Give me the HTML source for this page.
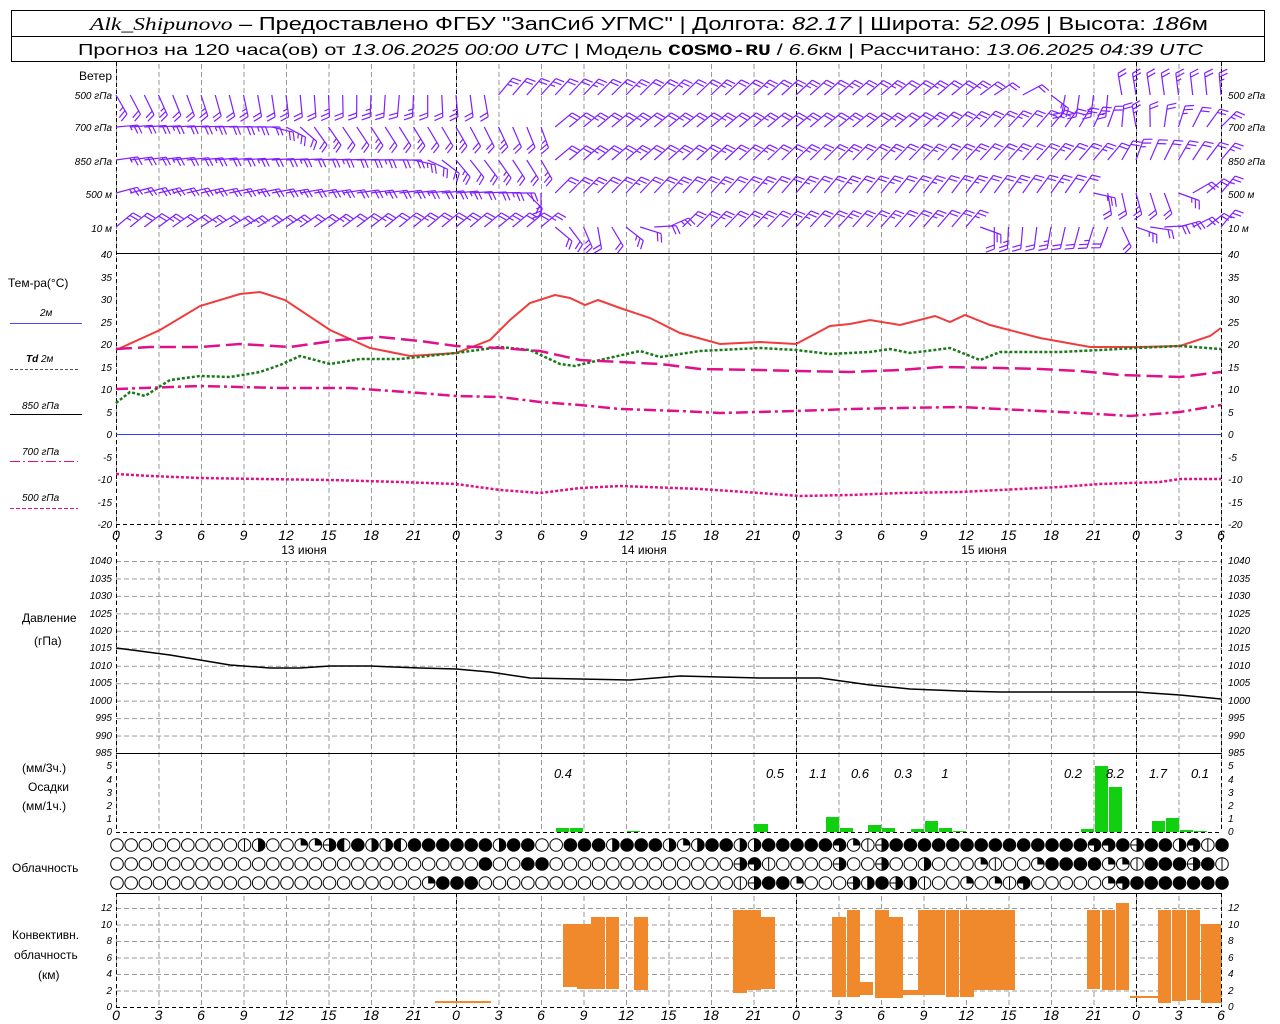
<!DOCTYPE html>
<html><head><meta charset="utf-8">
<style>
html,body{margin:0;padding:0;background:#fff;}
svg{display:block;font-family:"Liberation Sans",sans-serif;}
.ax{font-size:10px;font-style:italic;fill:#000;}
.hr{font-size:14px;font-style:italic;fill:#000;text-anchor:middle;}
.lb{font-size:12px;fill:#000;}
.pn{font-size:13px;font-style:italic;fill:#000;text-anchor:middle;}
</style></head><body>
<svg id="s" width="1280" height="1024" viewBox="0 0 1280 1024" xmlns="http://www.w3.org/2000/svg">
<defs>
<pattern id="vg" x="116" y="0" width="42.5" height="8" patternUnits="userSpaceOnUse"><line x1="0.5" y1="0" x2="0.5" y2="5" stroke="#9a9a9a" stroke-width="1"/></pattern>
<pattern id="hp" x="116" y="561" width="8" height="17.4545" patternUnits="userSpaceOnUse"><line x1="0" y1="0.5" x2="5" y2="0.5" stroke="#9a9a9a" stroke-width="1"/></pattern>
<pattern id="hc" x="116" y="1007" width="8" height="16.5" patternUnits="userSpaceOnUse"><line x1="0" y1="0.5" x2="5" y2="0.5" stroke="#9a9a9a" stroke-width="1"/></pattern>
</defs>
<rect width="1280" height="1024" fill="#fff"/>
<!-- header -->
<rect x="11.5" y="10.5" width="1253" height="51" fill="none" stroke="#000"/>
<line x1="11" y1="36.5" x2="1265" y2="36.5" stroke="#000"/>
<text x="90" y="30" font-size="18" textLength="1118" lengthAdjust="spacingAndGlyphs"><tspan font-family="Liberation Serif" font-style="italic">Alk_Shipunovo</tspan> – Предоставлено ФГБУ "ЗапСиб УГМС" | Долгота: <tspan font-style="italic">82.17</tspan> | Широта: <tspan font-style="italic">52.095</tspan> | Высота: <tspan font-style="italic">186</tspan>м</text>
<text x="78" y="55" font-size="16" textLength="1125" lengthAdjust="spacingAndGlyphs">Прогноз на 120 часа(ов) от <tspan font-style="italic">13.06.2025 00:00 UTC</tspan>  | Модель <tspan font-family="Liberation Mono" font-weight="bold">COSMO-RU</tspan> / <tspan font-style="italic">6.6</tspan>км | Рассчитано: <tspan font-style="italic">13.06.2025 04:39 UTC</tspan></text>

<!-- grids -->
<rect x="116" y="62" width="1106" height="191" fill="url(#vg)"/>
<rect x="116" y="253" width="1106" height="271" fill="url(#vg)"/>
<rect x="116" y="561" width="1106" height="192" fill="url(#vg)"/>
<rect x="116" y="561" width="1106" height="192" fill="url(#hp)"/>
<rect x="116" y="753" width="1106" height="79" fill="url(#vg)"/>
<rect x="116" y="893" width="1106" height="114" fill="url(#vg)"/>
<rect x="116" y="893" width="1106" height="114" fill="url(#hc)"/>
<g stroke="#000" stroke-dasharray="4,3" stroke-width="1">
<line x1="116.5" y1="62" x2="116.5" y2="832"/><line x1="116.5" y1="893" x2="116.5" y2="1007"/>
<line x1="456.5" y1="62" x2="456.5" y2="832"/><line x1="456.5" y1="893" x2="456.5" y2="1007"/>
<line x1="796.5" y1="62" x2="796.5" y2="832"/><line x1="796.5" y1="893" x2="796.5" y2="1007"/>
<line x1="1136.5" y1="62" x2="1136.5" y2="832"/><line x1="1136.5" y1="893" x2="1136.5" y2="1007"/>
<line x1="1221.5" y1="62" x2="1221.5" y2="832"/><line x1="1221.5" y1="893" x2="1221.5" y2="1007"/>
<line x1="116" y1="524.5" x2="1222" y2="524.5"/>
<line x1="116" y1="832.5" x2="1222" y2="832.5"/>
<line x1="116" y1="1007.5" x2="1222" y2="1007.5"/>
</g>
<line x1="116" y1="253.5" x2="1222" y2="253.5" stroke="#000"/>
<line x1="116" y1="753.5" x2="1222" y2="753.5" stroke="#000"/>
<line x1="116" y1="893.5" x2="1222" y2="893.5" stroke="#000"/>
<line x1="116" y1="434.5" x2="1222" y2="434.5" stroke="#3040ff" stroke-width="1"/>

<!-- wind labels -->
<text class="lb" x="112" y="80" text-anchor="end">Ветер</text>
<g class="ax" font-size="11">
<text x="112" y="99" text-anchor="end">500 гПа</text>
<text x="112" y="131" text-anchor="end">700 гПа</text>
<text x="112" y="165" text-anchor="end">850 гПа</text>
<text x="112" y="198" text-anchor="end">500  м</text>
<text x="112" y="232" text-anchor="end">10   м</text>
<text x="1228" y="99">500 гПа</text>
<text x="1228" y="131">700 гПа</text>
<text x="1228" y="165">850 гПа</text>
<text x="1228" y="198">500  м</text>
<text x="1228" y="232">10   м</text>
</g>

<!-- temp axis labels -->
<g class="ax">
<text x="112" y="258" text-anchor="end">40</text><text x="112" y="281" text-anchor="end">35</text><text x="112" y="303" text-anchor="end">30</text><text x="112" y="326" text-anchor="end">25</text><text x="112" y="348" text-anchor="end">20</text><text x="112" y="371" text-anchor="end">15</text><text x="112" y="393" text-anchor="end">10</text><text x="112" y="416" text-anchor="end">5</text><text x="112" y="438" text-anchor="end">0</text><text x="112" y="461" text-anchor="end">-5</text><text x="112" y="483" text-anchor="end">-10</text><text x="112" y="506" text-anchor="end">-15</text><text x="112" y="528" text-anchor="end">-20</text>
<text x="1228" y="258">40</text><text x="1228" y="281">35</text><text x="1228" y="303">30</text><text x="1228" y="326">25</text><text x="1228" y="348">20</text><text x="1228" y="371">15</text><text x="1228" y="393">10</text><text x="1228" y="416">5</text><text x="1228" y="438">0</text><text x="1228" y="461">-5</text><text x="1228" y="483">-10</text><text x="1228" y="506">-15</text><text x="1228" y="528">-20</text>
</g>
<!-- temp legend -->
<text class="lb" x="8" y="287">Тем-ра(°C)</text>
<text class="ax" x="40" y="316">2м</text>
<line x1="10" y1="323.5" x2="82" y2="323.5" stroke="#4a4aff"/>
<text class="ax" x="26" y="362" font-weight="bold">Td  <tspan font-weight="normal">2м</tspan></text>
<line x1="10" y1="369.5" x2="78" y2="369.5" stroke="#555" stroke-dasharray="3,2"/>
<text class="ax" x="22" y="409">850 гПа</text>
<line x1="10" y1="414.5" x2="82" y2="414.5" stroke="#000"/>
<text class="ax" x="22" y="455" fill="#e0108a">700 гПа</text>
<line x1="10" y1="461.5" x2="78" y2="461.5" stroke="#e0108a" stroke-dasharray="10,3,2,3"/>
<text class="ax" x="22" y="501">500 гПа</text>
<line x1="10" y1="508.5" x2="78" y2="508.5" stroke="#e0108a" stroke-dasharray="4,2"/>

<!-- temperature curves -->
<polyline fill="none" stroke="#f03c3c" stroke-width="2" points="116,350 160,330 200,306 240,294 260,292 285,300 330,330 370,348 410,356 456,353 490,340 510,320 530,303 555,295 570,298 585,305 598,300 620,308 650,318 680,333 720,344 760,342 796,344 830,326 850,324 870,320 900,325 935,316 950,322 965,315 990,325 1040,338 1090,347 1136,347 1180,346 1210,336 1221,328"/>
<polyline fill="none" stroke="#1a7a1a" stroke-width="2.5" stroke-dasharray="3,2" points="116,403 130,392 145,396 170,380 200,376 230,377 260,372 280,365 300,356 330,364 360,359 400,359 456,353 500,347 530,350 560,364 575,366 600,360 640,351 660,357 700,351 760,348 796,350 830,354 870,352 890,349 910,353 950,348 980,360 1000,352 1060,352 1100,350 1136,348 1180,346 1221,349"/>
<polyline fill="none" stroke="#e0108a" stroke-width="2.5" stroke-dasharray="16,6" points="116,349 150,347 200,347 240,344 290,347 340,340 380,337 420,341 456,346 500,348 540,351 580,360 620,362 660,364 700,369 760,370 796,371 850,372 900,370 940,367 1000,368 1040,369 1080,371 1120,375 1180,377 1221,372"/>
<polyline fill="none" stroke="#e0108a" stroke-width="2.5" stroke-dasharray="12,4,3,4" points="116,389 200,386 280,388 350,388 420,393 456,396 500,397 540,402 580,405 620,409 680,411 720,413 796,411 850,409 900,408 960,407 1000,409 1080,413 1130,416 1180,412 1221,405"/>
<polyline fill="none" stroke="#e0108a" stroke-width="2.5" stroke-dasharray="3,2" points="116,474 150,476 200,478 260,479 330,480 400,482 456,484 500,490 540,493 580,488 620,486 700,489 760,493 800,496 850,495 900,493 960,492 1000,490 1060,487 1100,484 1160,482 1180,479 1221,479"/>

<!-- hour labels (temp) -->
<g class="hr">
<text x="116" y="540">0</text><text x="158.5" y="540">3</text><text x="201" y="540">6</text><text x="243.5" y="540">9</text><text x="286" y="540">12</text><text x="328.5" y="540">15</text><text x="371" y="540">18</text><text x="413.5" y="540">21</text><text x="456" y="540">0</text><text x="498.5" y="540">3</text><text x="541" y="540">6</text><text x="583.5" y="540">9</text><text x="626" y="540">12</text><text x="668.5" y="540">15</text><text x="711" y="540">18</text><text x="753.5" y="540">21</text><text x="796" y="540">0</text><text x="838.5" y="540">3</text><text x="881" y="540">6</text><text x="923.5" y="540">9</text><text x="966" y="540">12</text><text x="1008.5" y="540">15</text><text x="1051" y="540">18</text><text x="1093.5" y="540">21</text><text x="1136" y="540">0</text><text x="1178.5" y="540">3</text><text x="1221" y="540">6</text>
</g>
<g class="lb" text-anchor="middle" font-size="13">
<text x="304" y="554">13 июня</text><text x="644" y="554">14 июня</text><text x="984" y="554">15 июня</text>
</g>

<!-- pressure -->
<g class="ax" font-size="9">
<text x="112" y="564" text-anchor="end">1040</text><text x="112" y="582" text-anchor="end">1035</text><text x="112" y="599" text-anchor="end">1030</text><text x="112" y="617" text-anchor="end">1025</text><text x="112" y="634" text-anchor="end">1020</text><text x="112" y="651" text-anchor="end">1015</text><text x="112" y="669" text-anchor="end">1010</text><text x="112" y="686" text-anchor="end">1005</text><text x="112" y="704" text-anchor="end">1000</text><text x="112" y="721" text-anchor="end">995</text><text x="112" y="739" text-anchor="end">990</text><text x="112" y="756" text-anchor="end">985</text>
<text x="1228" y="564">1040</text><text x="1228" y="582">1035</text><text x="1228" y="599">1030</text><text x="1228" y="617">1025</text><text x="1228" y="634">1020</text><text x="1228" y="651">1015</text><text x="1228" y="669">1010</text><text x="1228" y="686">1005</text><text x="1228" y="704">1000</text><text x="1228" y="721">995</text><text x="1228" y="739">990</text><text x="1228" y="756">985</text>
</g>
<text class="lb" x="22" y="622">Давление</text>
<text class="lb" x="34" y="645">(гПа)</text>
<polyline fill="none" stroke="#000" stroke-width="1.5" points="116,648 170,655 200,660 230,665 270,668 300,668 330,666 370,666 420,668 456,669 490,672 530,678 580,679 630,680 680,676 760,678 820,678 870,685 910,689 960,691 1000,692 1060,692 1136,692 1180,695 1221,699"/>

<!-- precip -->
<g class="ax" font-size="9">
<text x="112" y="835" text-anchor="end">0</text><text x="112" y="822" text-anchor="end">1</text><text x="112" y="809" text-anchor="end">2</text><text x="112" y="796" text-anchor="end">3</text><text x="112" y="783" text-anchor="end">4</text><text x="112" y="769" text-anchor="end">5</text>
<text x="1228" y="835">0</text><text x="1228" y="822">1</text><text x="1228" y="809">2</text><text x="1228" y="796">3</text><text x="1228" y="783">4</text><text x="1228" y="769">5</text>
</g>
<text class="lb" x="22" y="772">(мм/3ч.)</text>
<text class="lb" x="28" y="791">Осадки</text>
<text class="lb" x="22" y="810">(мм/1ч.)</text>
<g fill="#10d010">
<rect x="556" y="828" width="13" height="4"/><rect x="570" y="828" width="13" height="4"/><rect x="627" y="831" width="13" height="1"/>
<rect x="754" y="824" width="14" height="8"/>
<rect x="826" y="817" width="13" height="15"/><rect x="840" y="828" width="13" height="4"/>
<rect x="868" y="825" width="13" height="7"/><rect x="882" y="828" width="13" height="4"/>
<rect x="911" y="829" width="13" height="3"/><rect x="925" y="821" width="13" height="11"/><rect x="939" y="828" width="13" height="4"/><rect x="953" y="831" width="13" height="1"/>
<rect x="1081" y="829" width="13" height="3"/><rect x="1095" y="766" width="13" height="66"/><rect x="1109" y="787" width="13" height="45"/>
<rect x="1152" y="821" width="13" height="11"/><rect x="1166" y="818" width="13" height="14"/><rect x="1180" y="830" width="13" height="2"/><rect x="1194" y="831" width="13" height="1"/>
</g>
<g class="pn">
<text x="563" y="778">0.4</text><text x="775" y="778">0.5</text><text x="818" y="778">1.1</text><text x="860" y="778">0.6</text><text x="903" y="778">0.3</text><text x="945" y="778">1</text><text x="1073" y="778">0.2</text><text x="1115" y="778">8.2</text><text x="1158" y="778">1.7</text><text x="1200" y="778">0.1</text>
</g>

<text class="lb" x="12" y="872">Облачность</text>
<g id="clouds" stroke="#000" stroke-width="1"></g>

<!-- convective -->
<g class="ax" font-size="9">
<text x="112" y="1010" text-anchor="end">0</text><text x="112" y="994" text-anchor="end">2</text><text x="112" y="977" text-anchor="end">4</text><text x="112" y="961" text-anchor="end">6</text><text x="112" y="944" text-anchor="end">8</text><text x="112" y="928" text-anchor="end">10</text><text x="112" y="911" text-anchor="end">12</text>
<text x="1228" y="1010">0</text><text x="1228" y="994">2</text><text x="1228" y="977">4</text><text x="1228" y="961">6</text><text x="1228" y="944">8</text><text x="1228" y="928">10</text><text x="1228" y="911">12</text>
</g>
<text class="lb" x="12" y="939">Конвективн.</text>
<text class="lb" x="14" y="959">облачность</text>
<text class="lb" x="38" y="979">(км)</text>
<g fill="#f0882c">
<rect x="435" y="1001" width="56" height="2"/>
<rect x="563" y="924" width="14" height="63"/><rect x="577" y="924" width="14" height="65"/><rect x="591" y="917" width="14" height="72"/><rect x="606" y="917" width="13" height="72"/>
<rect x="634" y="917" width="14" height="73"/>
<rect x="733" y="910" width="14" height="83"/><rect x="747" y="910" width="14" height="80"/><rect x="761" y="917" width="14" height="72"/>
<rect x="832" y="917" width="14" height="80"/><rect x="847" y="910" width="13" height="87"/><rect x="860" y="982" width="13" height="13"/><rect x="875" y="910" width="14" height="88"/><rect x="889" y="917" width="14" height="81"/><rect x="903" y="990" width="15" height="5"/><rect x="918" y="910" width="27" height="85"/><rect x="946" y="910" width="13" height="87"/><rect x="960" y="910" width="14" height="87"/><rect x="974" y="910" width="41" height="80"/>
<rect x="1087" y="910" width="13" height="79"/><rect x="1102" y="910" width="13" height="80"/><rect x="1116" y="903" width="13" height="87"/><rect x="1130" y="996" width="28" height="2"/>
<rect x="1158" y="910" width="13" height="93"/><rect x="1172" y="910" width="14" height="91"/><rect x="1187" y="910" width="13" height="90"/><rect x="1201" y="924" width="20" height="79"/>
</g>
<g class="hr">
<text x="116" y="1020">0</text><text x="158.5" y="1020">3</text><text x="201" y="1020">6</text><text x="243.5" y="1020">9</text><text x="286" y="1020">12</text><text x="328.5" y="1020">15</text><text x="371" y="1020">18</text><text x="413.5" y="1020">21</text><text x="456" y="1020">0</text><text x="498.5" y="1020">3</text><text x="541" y="1020">6</text><text x="583.5" y="1020">9</text><text x="626" y="1020">12</text><text x="668.5" y="1020">15</text><text x="711" y="1020">18</text><text x="753.5" y="1020">21</text><text x="796" y="1020">0</text><text x="838.5" y="1020">3</text><text x="881" y="1020">6</text><text x="923.5" y="1020">9</text><text x="966" y="1020">12</text><text x="1008.5" y="1020">15</text><text x="1051" y="1020">18</text><text x="1093.5" y="1020">21</text><text x="1136" y="1020">0</text><text x="1178.5" y="1020">3</text><text x="1221" y="1020">6</text>
</g>
<g id="wind" stroke="#7f1fff" stroke-width="1.2" fill="none"></g>
</svg>
<script>
(function(){
var NS="http://www.w3.org/2000/svg";
function el(p,t,a){var e=document.createElementNS(NS,t);for(var k in a)e.setAttribute(k,a[k]);p.appendChild(e);return e;}
// clouds
var rows=[
"000000000vR001 1cL4RRL444444".replace(/ /g,"")+"R4400444R444R1R44RR444444310c".slice(0,0),
"",""];
var r1="000000000vR0011cL4RRL444444"+"R4400444R444R1R44RR4444431vc"+"44444444444444334c44R3v44444";
var r2="00000000000000000000000000400"+"440000000000000c3v0000c0"+"0c00R0001v001444411v444c4vR11";
var r3="0000000000000000000000144400"+"0000000000000000vc44100"+"0cR4cRv00101v3000001344444444c";
function fix(s){while(s.length<79)s+="4";return s.slice(0,79);}
var R=[fix(r1),fix(r2),fix(r3)],Y=[845,864,883];
var g=document.getElementById("clouds"),r=6.3;
for(var j=0;j<3;j++)for(var i=0;i<79;i++){
 var cx=117+i*14.1667,cy=Y[j],c=R[j][i];
 if(c=="4"){el(g,"circle",{cx:cx,cy:cy,r:r,fill:"#000"});continue;}
 el(g,"circle",{cx:cx,cy:cy,r:r,fill:"#fff"});
 if(c=="1")el(g,"path",{d:"M"+cx+","+cy+"V"+(cy-r)+"A"+r+","+r+" 0 0 1 "+(cx+r)+","+cy+"Z",fill:"#000"});
 if(c=="3")el(g,"path",{d:"M"+cx+","+cy+"H"+(cx-r)+"A"+r+","+r+" 0 1 1 "+cx+","+(cy+r)+"Z",fill:"#000"});
 if(c=="R"||c=="c")el(g,"path",{d:"M"+cx+","+(cy-r)+"A"+r+","+r+" 0 0 1 "+cx+","+(cy+r)+"Z",fill:"#000"});
 if(c=="L")el(g,"path",{d:"M"+cx+","+(cy-r)+"A"+r+","+r+" 0 0 0 "+cx+","+(cy+r)+"Z",fill:"#000"});
 if(c=="v"||c=="R"||c=="L"||c=="c")el(g,"line",{x1:cx,y1:cy-r,x2:cx,y2:cy+r});
 if(c=="c")el(g,"line",{x1:cx-r,y1:cy,x2:cx,y2:cy});
}
// wind
var W=[
 [95,[[0,-60],[10,-80],[20,-95],[26,-80],[27,50],[35,45],[60,40],[65,25],[67,-100],[70,-95],[71,100],[78,95]]],
 [127,[[0,5],[10,0],[14,-55],[24,-60],[30,-70],[31,40],[55,40],[60,45],[66,50],[70,70],[72,100],[78,45]]],
 [160,[[0,8],[20,0],[24,-50],[30,-60],[31,40],[70,50],[72,70],[78,50]]],
 [193,[[0,15],[24,5],[28,0],[30,-90],[31,45],[68,55],[70,-80],[74,-70],[76,30],[78,50]]],
 [227,[[0,40],[8,30],[20,40],[30,40],[31,-40],[34,-80],[40,45],[60,50],[62,-90],[66,-100],[70,-110],[72,-20],[78,50]]]];
function ang(k,h){for(var i=1;i<k.length;i++){if(h<=k[i][0]){var a=k[i-1],b=k[i],t=(h-a[0])/(b[0]-a[0]||1);return a[1]+(b[1]-a[1])*t;}}return k[k.length-1][1];}
var wg=document.getElementById("wind");
for(var w=0;w<5;w++){var y0=W[w][0],k=W[w][1];
 for(var i=0;i<79;i++){
  if(w==0&&i>=62&&i<=66&&i%2)continue;
  var x0=116+i*14.1667,a=ang(k,i)*Math.PI/180,L=22;
  var dx=Math.cos(a),dy=-Math.sin(a),x1=x0+dx*L,y1=y0+dy*L;
  var d="M"+x0.toFixed(1)+","+y0+"L"+x1.toFixed(1)+","+y1.toFixed(1);
  var nb=(i*7+w*3)%3==0?3:2;
  for(var b=0;b<nb;b++){
   var bx=x1-dx*b*4,by=y1-dy*b*4,ba=a-Math.PI/2.6,bl=(b==nb-1&&nb==3)?5:9;
   d+="M"+bx.toFixed(1)+","+by.toFixed(1)+"l"+(Math.cos(ba)*bl).toFixed(1)+","+(-Math.sin(ba)*bl).toFixed(1);
  }
  el(wg,"path",{d:d});
 }}
})();
</script>
</body></html>
